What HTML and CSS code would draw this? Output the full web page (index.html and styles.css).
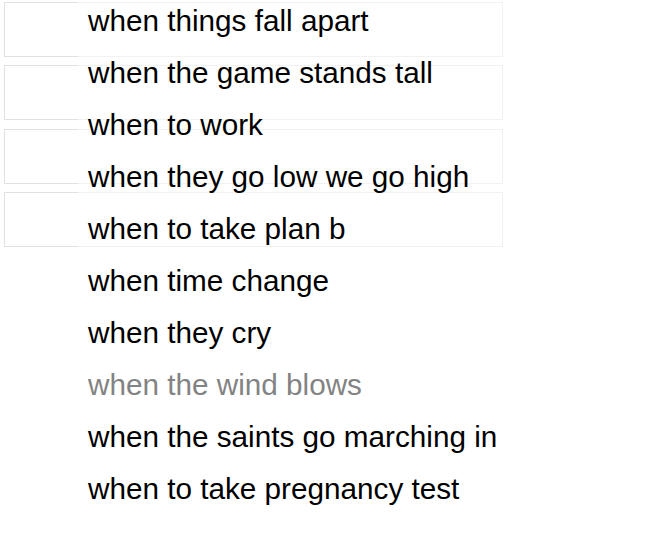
FILE: index.html
```html
<!DOCTYPE html>
<html>
<head>
<meta charset="utf-8">
<link rel="stylesheet" href="styles.css">
</head>
<body>
<div class="wrap">
  <div class="boxes">
    <div class="box"></div>
    <div class="box"></div>
    <div class="box"></div>
    <div class="box"></div>
  </div>
  <ul class="list">
    <li>when things fall apart</li>
    <li>when the game stands tall</li>
    <li>when to work</li>
    <li>when they go low we go high</li>
    <li>when to take plan b</li>
    <li>when time change</li>
    <li>when they cry</li>
    <li class="muted">when the wind blows</li>
    <li>when the saints go marching in</li>
    <li>when to take pregnancy test</li>
  </ul>
</div>
</body>
</html>
```
FILE: styles.css
```css
html, body {
  margin: 0;
  padding: 0;
  background: #fff;
}
.wrap {
  position: relative;
  width: 668px;
  height: 540px;
  overflow: hidden;
}
.boxes {
  display: flex;
  flex-direction: column;
  gap: 8.33px;
  padding: 2px 0 0 4px;
}
.box {
  box-sizing: border-box;
  width: 499px;
  height: 55px;
  border: 1px solid #e1e1e1;
  background: #fff;
}
.list {
  position: absolute;
  left: 78px;
  top: -5px;
  width: 440px;
  margin: 0;
  padding: 0;
  list-style: none;
  background: rgba(255, 255, 255, 0.57);
  font-family: "Liberation Sans", Arial, sans-serif;
  font-size: 29.7px;
  color: #000;
}
.list li {
  line-height: 52px;
  padding-left: 10px;
  white-space: nowrap;
}
.list li.muted {
  color: #838383;
}
```
